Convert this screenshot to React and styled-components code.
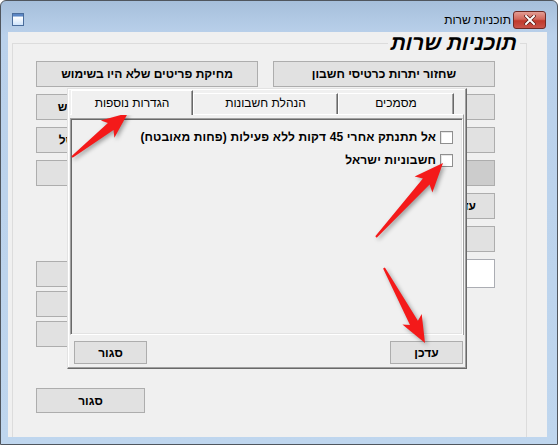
import React from 'react';
import styled, { createGlobalStyle } from 'styled-components';

const GlobalStyle = createGlobalStyle`
	html, body {
		margin: 0;
		padding: 0;
		background: #ffffff;
	}
	body {
		font-family: "Liberation Sans", "DejaVu Sans", sans-serif;
	}
`;

const FONT = `"Liberation Sans", "DejaVu Sans", sans-serif`;

const Window = styled.div`
	position: relative;
	width: 558px;
	height: 445px;
	box-sizing: border-box;
	border: 1px solid #50565e;
	border-radius: 6px 6px 0 0;
	background: linear-gradient(#a6bfdb 0px, #bad1eb 34px, #bfd6ee 100%);
	padding: 0 10px 7px 7px;
	display: flex;
	flex-direction: column;
	overflow: hidden;
`;

const TitleBar = styled.div`
	height: 31px;
	box-sizing: border-box;
	padding: 6px 1px 0 4px;
	display: flex;
	align-items: center;
`;

const TitleText = styled.span`
	margin-left: auto;
	margin-right: 2px;
	font: 12px ${FONT};
	color: #000;
	direction: rtl;
`;

const CloseButton = styled.div`
	width: 33px;
	height: 18px;
	box-sizing: border-box;
	border: 1px solid #6f2a24;
	border-radius: 3px;
	background: linear-gradient(#e39d94 0%, #d2675b 45%, #c0392b 55%, #c9544a 100%);
	display: flex;
	align-items: center;
	justify-content: center;
`;

const Client = styled.div`
	flex: 1;
	background: #f0f0f0;
	direction: rtl;
	display: flex;
	flex-direction: column;
	overflow: hidden;
`;

const GroupBox = styled.fieldset`
	flex: 1;
	margin: 0 20px -6px 4px;
	padding: 0;
	border: 1px solid #dcdcdc;
	min-width: 0;
`;

const Legend = styled.legend`
	margin-right: 6px;
	padding: 0 3px;
	font: bold 21px/22px ${FONT};
	color: #000;
`;

const Slanted = styled.span`
	display: inline-block;
	transform: skewX(-13deg);
`;

const FormBody = styled.div`
	padding: 7px 31px 0 25px;
	display: flex;
	gap: 13px;
	align-items: flex-start;
`;

const Column = styled.div`
	display: flex;
	flex-direction: column;
	gap: ${p => p.$gap || 7}px;
	margin-top: ${p => p.$top || 0}px;
`;

const Btn = styled.button`
	box-sizing: border-box;
	width: ${p => p.$w || 222}px;
	height: ${p => p.$h || 26}px;
	margin-top: ${p => p.$top || 0}px;
	align-self: ${p => (p.$end ? 'flex-end' : 'auto')};
	background: ${p => (p.$dim ? '#cccccc' : '#e1e1e1')};
	border: 1px solid #adadad;
	padding: 0;
	font: bold 12px ${FONT};
	color: #000;
	white-space: nowrap;
	overflow: hidden;
	direction: rtl;
	flex-shrink: 0;
`;

const TextBox = styled.div`
	box-sizing: border-box;
	width: 224px;
	height: 29px;
	background: #ffffff;
	border: 1px solid #abadb3;
`;

const Dialog = styled.div`
	position: absolute;
	left: 66px;
	top: 87px;
	width: 400px;
	height: 281px;
	box-sizing: border-box;
	background: #f0f0f0;
	border: 1px solid;
	border-color: #e3e3e3 #696969 #696969 #e3e3e3;
	box-shadow: inset -1px -1px #a0a0a0, inset 1px 1px #ffffff;
	padding: 1px 2px 0 2px;
	direction: rtl;
	display: flex;
	flex-direction: column;
`;

const TabStrip = styled.div`
	height: 24px;
	display: flex;
	align-items: flex-end;
	padding-right: 10px;
	position: relative;
	z-index: 1;
`;

const Tab = styled.div`
	box-sizing: border-box;
	width: ${p => p.$w}px;
	height: ${p => (p.$active ? 25 : 21)}px;
	margin-bottom: ${p => (p.$active ? -1 : 0)}px;
	padding-top: ${p => (p.$active ? 4 : 1)}px;
	background: #f0f0f0;
	border-top: 1px solid #ffffff;
	border-left: 1px solid #ffffff;
	border-right: 1px solid #696969;
	box-shadow: inset -1px 0 #a0a0a0;
	text-align: center;
	font: 12px/16px ${FONT};
	color: #000;
`;

const TabPage = styled.div`
	border-top: 1px solid #ffffff;
	border-right: 1px solid #a0a0a0;
	padding-top: 3px;
`;

const Panel = styled.div`
	box-sizing: border-box;
	height: 217px;
	border: 1px solid;
	border-color: #a0a0a0 #ffffff #ffffff #a0a0a0;
	box-shadow: inset 1px 1px #696969, inset -1px -1px #e3e3e3;
	padding: 10px 9px 0 0;
	display: flex;
	flex-direction: column;
	gap: 7px;
`;

const CheckRow = styled.label`
	display: flex;
	align-items: center;
	gap: 4px;
	font: bold 12px/16px ${FONT};
	letter-spacing: 0.15px;
	color: #000;
`;

const CheckBox = styled.span`
	box-sizing: border-box;
	width: 13px;
	height: 13px;
	background: #ffffff;
	border: 1px solid #8f8f8f;
	box-shadow: inset 1px 1px #e6e6e6;
	flex-shrink: 0;
`;

const Footer = styled.div`
	display: flex;
	justify-content: space-between;
	padding: 6px 1px 0 4px;
`;

const ArrowLayer = styled.svg`
	position: absolute;
	left: -1px;
	top: -1px;
	pointer-events: none;
	filter: drop-shadow(2px 2px 2px rgba(0, 0, 0, 0.35));
`;

function arrowPoints(tail, tip, head, wing) {
	const [tx, ty] = tail;
	const [px, py] = tip;
	const len = Math.hypot(px - tx, py - ty);
	const ux = (px - tx) / len;
	const uy = (py - ty) / len;
	const nx = -uy;
	const ny = ux;
	const bx = px - ux * head;
	const by = py - uy * head;
	const wx = px - ux * (head + 4);
	const wy = py - uy * (head + 4);
	const shaft = 4.5;
	const pts = [
		[tx + nx, ty + ny],
		[bx + nx * shaft, by + ny * shaft],
		[wx + nx * wing, wy + ny * wing],
		[px, py],
		[wx - nx * wing, wy - ny * wing],
		[bx - nx * shaft, by - ny * shaft],
		[tx - nx, ty - ny],
	];
	return pts.map(p => p.map(v => v.toFixed(1)).join(',')).join(' ');
}

const arrows = [
	{ tail: [72, 157], tip: [128, 113], head: 22, wing: 11 },
	{ tail: [376, 237], tip: [443, 163], head: 25, wing: 12 },
	{ tail: [384, 268], tip: [425, 343], head: 23, wing: 11 },
];

function WindowIcon() {
	return (
		<svg width="12" height="13" viewBox="0 0 12 13">
			<defs>
				<linearGradient id="iconBody" x1="0" y1="0" x2="0" y2="1">
					<stop offset="0" stopColor="#ffffff" />
					<stop offset="1" stopColor="#cfe4fb" />
				</linearGradient>
			</defs>
			<rect x="0.5" y="0.5" width="11" height="12" fill="#eef6ff" stroke="#4a6d9c" />
			<rect x="1" y="1" width="10" height="2.5" fill="#5b86c4" />
			<rect x="1" y="4" width="10" height="8" fill="url(#iconBody)" />
		</svg>
	);
}

function CloseGlyph() {
	return (
		<svg width="12" height="10" viewBox="0 0 12 10">
			<path d="M2 1 L10 9 M10 1 L2 9" stroke="#5a1a14" strokeWidth="3.4" strokeLinecap="square" />
			<path d="M2 1 L10 9 M10 1 L2 9" stroke="#ffffff" strokeWidth="2" strokeLinecap="square" />
		</svg>
	);
}

export default function App() {
	return (
		<>
			<GlobalStyle />
			<Window>
				<TitleBar>
					<WindowIcon />
					<TitleText>תוכניות שרות</TitleText>
					<CloseButton><CloseGlyph /></CloseButton>
				</TitleBar>
				<Client>
					<GroupBox>
						<Legend><Slanted>תוכניות שרות</Slanted></Legend>
						<FormBody>
							<Column>
								<Btn>שחזור יתרות כרטיסי חשבון</Btn>
								<Btn>חישוב מחדש של יתרות מלאי</Btn>
								<Btn>בדיקת תקינות מסמכים</Btn>
								<Btn $dim />
								<Btn>עדכון מחירים לפי אחוזי הנחה כללי</Btn>
								<Btn>סידור מספור מסמכים</Btn>
								<TextBox />
							</Column>
							<Column>
								<Btn>מחיקת פריטים שלא היו בשימוש</Btn>
								<Btn>בניית אינדקס לכל הקבצים מחדש</Btn>
								<Btn>ייצוא נתוני הלקוחות לקובץ אקסל</Btn>
								<Btn>גיבוי</Btn>
								<Column $gap={4} $top={68}>
									<Btn>שחזור</Btn>
									<Btn>דחיסה</Btn>
									<Btn>ייבוא</Btn>
								</Column>
								<Btn $w={109} $h={25} $top={34} $end>סגור</Btn>
							</Column>
						</FormBody>
					</GroupBox>
				</Client>

				<Dialog>
					<TabStrip>
						<Tab $w={116}>מסמכים</Tab>
						<Tab $w={145}>הנהלת חשבונות</Tab>
						<Tab $w={122} $active>הגדרות נוספות</Tab>
					</TabStrip>
					<TabPage>
						<Panel>
							<CheckRow>
								<CheckBox />
								אל תתנתק אחרי 45 דקות ללא פעילות (פחות מאובטח)
							</CheckRow>
							<CheckRow>
								<CheckBox />
								חשבוניות ישראל
							</CheckRow>
						</Panel>
					</TabPage>
					<Footer>
						<Btn $w={73} $h={23}>עדכן</Btn>
						<Btn $w={73} $h={23}>סגור</Btn>
					</Footer>
				</Dialog>

				<ArrowLayer width="558" height="445" viewBox="0 0 558 445">
					{arrows.map((a, i) => (
						<polygon key={i} points={arrowPoints(a.tail, a.tip, a.head, a.wing)} fill="#f41a1a" />
					))}
				</ArrowLayer>
			</Window>
		</>
	);
}
